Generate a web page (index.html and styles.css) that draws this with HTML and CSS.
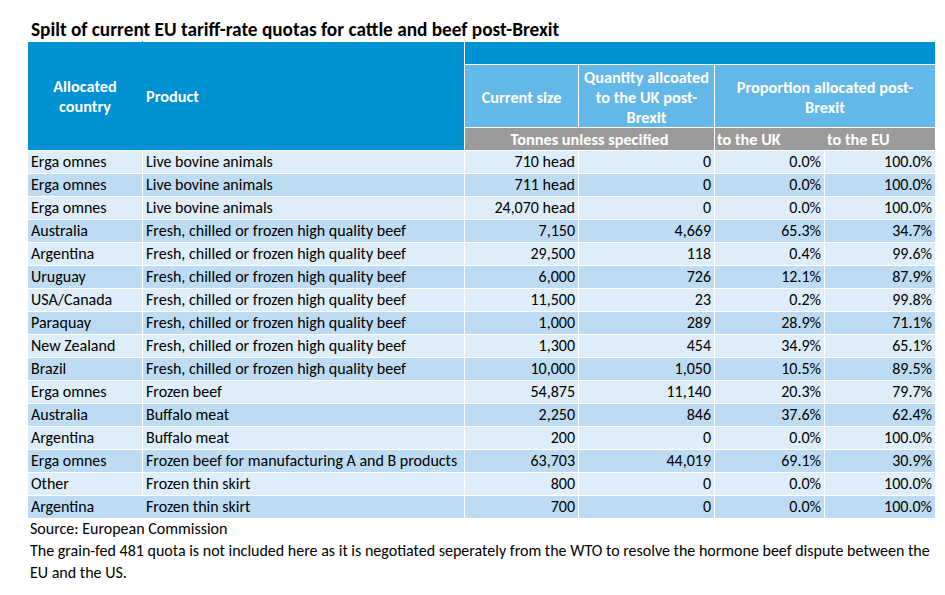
FILE: index.html
```html
<!DOCTYPE html>
<html lang="en">
<head>
<meta charset="utf-8">
<title>EU tariff-rate quotas</title>
<link rel="stylesheet" href="styles.css">
</head>
<body>
<div class="page">
  <h1 class="title">Spilt of current EU tariff-rate quotas for cattle and beef post-Brexit</h1>
  <table class="quota">
    <colgroup>
      <col class="c1"><col class="c2"><col class="c3"><col class="c4"><col class="c5"><col class="c6">
    </colgroup>
    <thead>
      <tr class="h-top">
        <th rowspan="3" class="hd dark center first">Allocated<br>country</th>
        <th rowspan="3" class="hd dark left second">Product</th>
        <th colspan="4" class="hd dark"></th>
      </tr>
      <tr class="h-mid">
        <th class="hd light center">Current size</th>
        <th class="hd light center">Quantity allcoated<br>to the UK post-<br>Brexit</th>
        <th colspan="2" class="hd light center">Proportion allocated post-<br>Brexit</th>
      </tr>
      <tr class="h-unit">
        <th colspan="2" class="hd grey center">Tonnes unless specified</th>
        <th class="hd grey left to-uk">to the UK</th>
        <th class="hd grey left">to the EU</th>
      </tr>
    </thead>
    <tbody>
      <tr class="odd"><td>Erga omnes</td><td>Live bovine animals</td><td class="num">710 head</td><td class="num">0</td><td class="num">0.0%</td><td class="num">100.0%</td></tr>
      <tr class="even"><td>Erga omnes</td><td>Live bovine animals</td><td class="num">711 head</td><td class="num">0</td><td class="num">0.0%</td><td class="num">100.0%</td></tr>
      <tr class="odd"><td>Erga omnes</td><td>Live bovine animals</td><td class="num">24,070 head</td><td class="num">0</td><td class="num">0.0%</td><td class="num">100.0%</td></tr>
      <tr class="even"><td>Australia</td><td>Fresh, chilled or frozen high quality beef</td><td class="num">7,150</td><td class="num">4,669</td><td class="num">65.3%</td><td class="num">34.7%</td></tr>
      <tr class="odd"><td>Argentina</td><td>Fresh, chilled or frozen high quality beef</td><td class="num">29,500</td><td class="num">118</td><td class="num">0.4%</td><td class="num">99.6%</td></tr>
      <tr class="even"><td>Uruguay</td><td>Fresh, chilled or frozen high quality beef</td><td class="num">6,000</td><td class="num">726</td><td class="num">12.1%</td><td class="num">87.9%</td></tr>
      <tr class="odd"><td>USA/Canada</td><td>Fresh, chilled or frozen high quality beef</td><td class="num">11,500</td><td class="num">23</td><td class="num">0.2%</td><td class="num">99.8%</td></tr>
      <tr class="even"><td>Paraquay</td><td>Fresh, chilled or frozen high quality beef</td><td class="num">1,000</td><td class="num">289</td><td class="num">28.9%</td><td class="num">71.1%</td></tr>
      <tr class="odd"><td>New Zealand</td><td>Fresh, chilled or frozen high quality beef</td><td class="num">1,300</td><td class="num">454</td><td class="num">34.9%</td><td class="num">65.1%</td></tr>
      <tr class="even"><td>Brazil</td><td>Fresh, chilled or frozen high quality beef</td><td class="num">10,000</td><td class="num">1,050</td><td class="num">10.5%</td><td class="num">89.5%</td></tr>
      <tr class="odd"><td>Erga omnes</td><td>Frozen beef</td><td class="num">54,875</td><td class="num">11,140</td><td class="num">20.3%</td><td class="num">79.7%</td></tr>
      <tr class="even"><td>Australia</td><td>Buffalo meat</td><td class="num">2,250</td><td class="num">846</td><td class="num">37.6%</td><td class="num">62.4%</td></tr>
      <tr class="odd"><td>Argentina</td><td>Buffalo meat</td><td class="num">200</td><td class="num">0</td><td class="num">0.0%</td><td class="num">100.0%</td></tr>
      <tr class="even"><td>Erga omnes</td><td>Frozen beef for manufacturing A and B products</td><td class="num">63,703</td><td class="num">44,019</td><td class="num">69.1%</td><td class="num">30.9%</td></tr>
      <tr class="odd"><td>Other</td><td>Frozen thin skirt</td><td class="num">800</td><td class="num">0</td><td class="num">0.0%</td><td class="num">100.0%</td></tr>
      <tr class="even last"><td class="nosep-r">Argentina</td><td>Frozen thin skirt</td><td class="num">700</td><td class="num">0</td><td class="num">0.0%</td><td class="num">100.0%</td></tr>
    </tbody>
  </table>
  <div class="notes">
    <p>Source: European Commission</p>
    <p>The grain-fed 481 quota is not included here as it is negotiated seperately from the WTO to resolve the hormone beef dispute between the EU and the US.</p>
  </div>
</div>
</body>
</html>
```

FILE: styles.css
```css
html, body {
  margin: 0;
  padding: 0;
  background: #ffffff;
}

body {
  font-family: Carlito, Lato, "Open Sans", sans-serif;
  color: #000000;
}

.page {
  padding: 18px 0 0 27px;
  width: 908px;
}

.title {
  margin: 0 0 0 4px;
  font-size: 19.3px;
  font-weight: 700;
  line-height: 23px;
  height: 23px;
}

.quota {
  border-collapse: collapse;
  table-layout: fixed;
  width: 908px;
  font-size: 16px;
}

.c1 { width: 115px; }
.c2 { width: 322px; }
.c3 { width: 114px; }
.c4 { width: 136px; }
.c5 { width: 110px; }
.c6 { width: 111px; }

.quota th,
.quota td {
  border: 1px solid #ffffff;
  padding: 0 3px;
  white-space: nowrap;
  overflow: hidden;
}

.hd {
  color: #ffffff;
  font-weight: 700;
  font-size: 16.3px;
  line-height: 20px;
}

.dark { background: #0090d4; }
.light { background: #63b8e8; }
.grey { background: #9b9b9b; }

.center { text-align: center; }
.left { text-align: left; }

.first { border-right-color: #0090d4 !important; }
.second { padding-left: 2px; }
.to-uk { border-right-color: #9b9b9b !important; }

.h-top { height: 23px; }
.h-mid { height: 62px; }
.h-unit { height: 23px; }

.h-mid .light { padding-top: 2px; }
.h-unit .left { padding-left: 2px; }

.quota td {
  height: 22px;
  line-height: 22px;
}

.odd td { background: #ddedfa; }
.even td { background: #bddcf4; }

.num { text-align: right; }

.last td { border-bottom: none; }
.nosep-r { border-right-color: #bddcf4 !important; }

.notes {
  padding-left: 3px;
  font-size: 16px;
  line-height: 22px;
}

.notes p {
  margin: 0;
}
```
